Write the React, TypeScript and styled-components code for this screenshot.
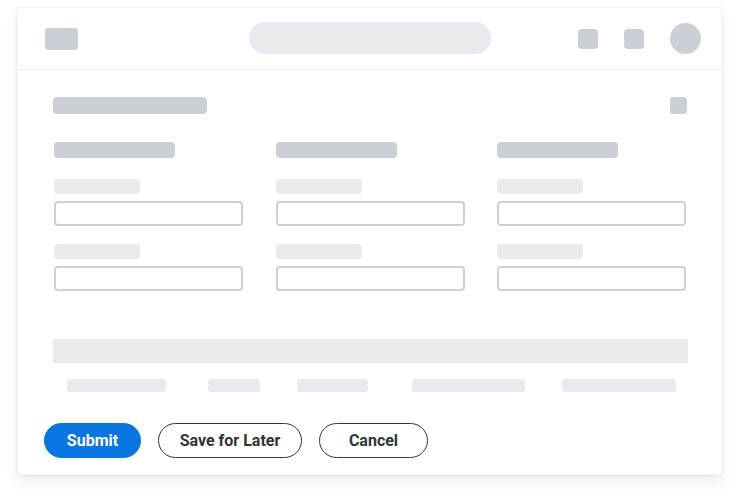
import React from 'react';
import styled, { createGlobalStyle } from 'styled-components';

const GlobalStyle = createGlobalStyle`
  html, body {
    margin: 0;
    padding: 0;
    background: #ffffff;
    font-family: Roboto, "Liberation Sans", sans-serif;
  }
`;

const Page = styled.main`
  width: 740px;
  height: 502px;
  box-sizing: border-box;
  padding: 7px 18px 0 17px;
`;

const Card = styled.section`
  width: 705px;
  height: 468px;
  box-sizing: border-box;
  background: #fff;
  border: 1px solid #f1f2f3;
  box-shadow: 0 8px 14px rgba(0, 0, 0, 0.07), 0 1px 5px rgba(0, 0, 0, 0.04);
  display: flex;
  flex-direction: column;
`;

const TopBar = styled.header`
  height: 62px;
  box-sizing: border-box;
  border-bottom: 1px solid #eceef0;
  display: flex;
  align-items: center;
  padding: 0 20px 0 27px;
`;

const Block = styled.div<{ w: number; h: number; light?: boolean; r?: number }>`
  width: ${p => p.w}px;
  height: ${p => p.h}px;
  border-radius: ${p => (p.r !== undefined ? p.r : 4)}px;
  background: ${p => (p.light ? '#e8ebee' : '#cbd0d6')};
  flex: none;
`;

const Search = styled.div`
  width: 242px;
  height: 32px;
  border-radius: 16px;
  background: #e8ebee;
  margin: 0 auto 1px 171px;
`;

const Icons = styled.div`
  display: flex;
  align-items: center;
  gap: 26px;
`;

const Body = styled.div`
  padding: 27px 33px 0 35px;
`;

const TitleRow = styled.div`
  display: flex;
  justify-content: space-between;
  align-items: center;
  padding-right: 1px;
`;

const Columns = styled.div`
  display: grid;
  grid-template-columns: repeat(3, 189px);
  column-gap: 32.5px;
  margin-top: 28px;
  padding-left: 1px;
`;

const Column = styled.div`
  display: flex;
  flex-direction: column;
`;

const Field = styled.div`
  display: flex;
  flex-direction: column;
  gap: 7px;
  margin-top: 21px;
  & + & {
    margin-top: 18px;
  }
`;

const Input = styled.div`
  height: 25px;
  box-sizing: border-box;
  border: 2px solid #cbd0d6;
  border-radius: 4px;
  background: #fff;
`;

const TableHead = styled.div`
  height: 24px;
  background: #e8ebee;
  margin-top: 48px;
`;

const TableRow = styled.div`
  display: flex;
  align-items: center;
  margin-top: 16px;
  padding-left: 14px;
`;

const Cell = styled.div<{ w: number; ml: number }>`
  width: ${p => p.w}px;
  height: 13px;
  border-radius: 3px;
  background: #e8ebee;
  margin-left: ${p => p.ml}px;
`;

const Footer = styled.footer`
  display: flex;
  gap: 17px;
  padding: 31px 0 0 26px;
`;

const Button = styled.button<{ primary?: boolean; w: number }>`
  width: ${p => p.w}px;
  height: 35px;
  box-sizing: border-box;
  border-radius: 18px;
  border: 1px solid ${p => (p.primary ? '#0875e1' : '#333')};
  background: ${p => (p.primary ? '#0875e1' : '#fff')};
  color: ${p => (p.primary ? '#fff' : '#333')};
  font-family: Roboto, "Liberation Sans", sans-serif;
  font-weight: 700;
  font-size: 16px;
  padding: 0;
  cursor: pointer;
`;

const columns = [0, 1, 2];
const cells = [
  { w: 99, ml: 0 },
  { w: 52, ml: 42 },
  { w: 71, ml: 37 },
  { w: 113, ml: 44 },
  { w: 114, ml: 37 },
];

export default function App() {
  return (
    <>
      <GlobalStyle />
      <Page>
        <Card>
          <TopBar>
            <Block w={33} h={22} r={3} />
            <Search />
            <Icons>
              <Block w={20} h={20} />
              <Block w={20} h={20} />
              <Block w={31} h={31} r={16} />
            </Icons>
          </TopBar>
          <Body>
            <TitleRow>
              <Block w={154} h={17} />
              <Block w={17} h={17} r={3} />
            </TitleRow>
            <Columns>
              {columns.map(c => (
                <Column key={c}>
                  <Block w={121} h={16} />
                  <Field>
                    <Block w={86} h={15} light />
                    <Input />
                  </Field>
                  <Field>
                    <Block w={86} h={15} light />
                    <Input />
                  </Field>
                </Column>
              ))}
            </Columns>
            <TableHead />
            <TableRow>
              {cells.map((c, i) => (
                <Cell key={i} w={c.w} ml={c.ml} />
              ))}
            </TableRow>
          </Body>
          <Footer>
            <Button primary w={97}>Submit</Button>
            <Button w={144}>Save for Later</Button>
            <Button w={109}>Cancel</Button>
          </Footer>
        </Card>
      </Page>
    </>
  );
}
